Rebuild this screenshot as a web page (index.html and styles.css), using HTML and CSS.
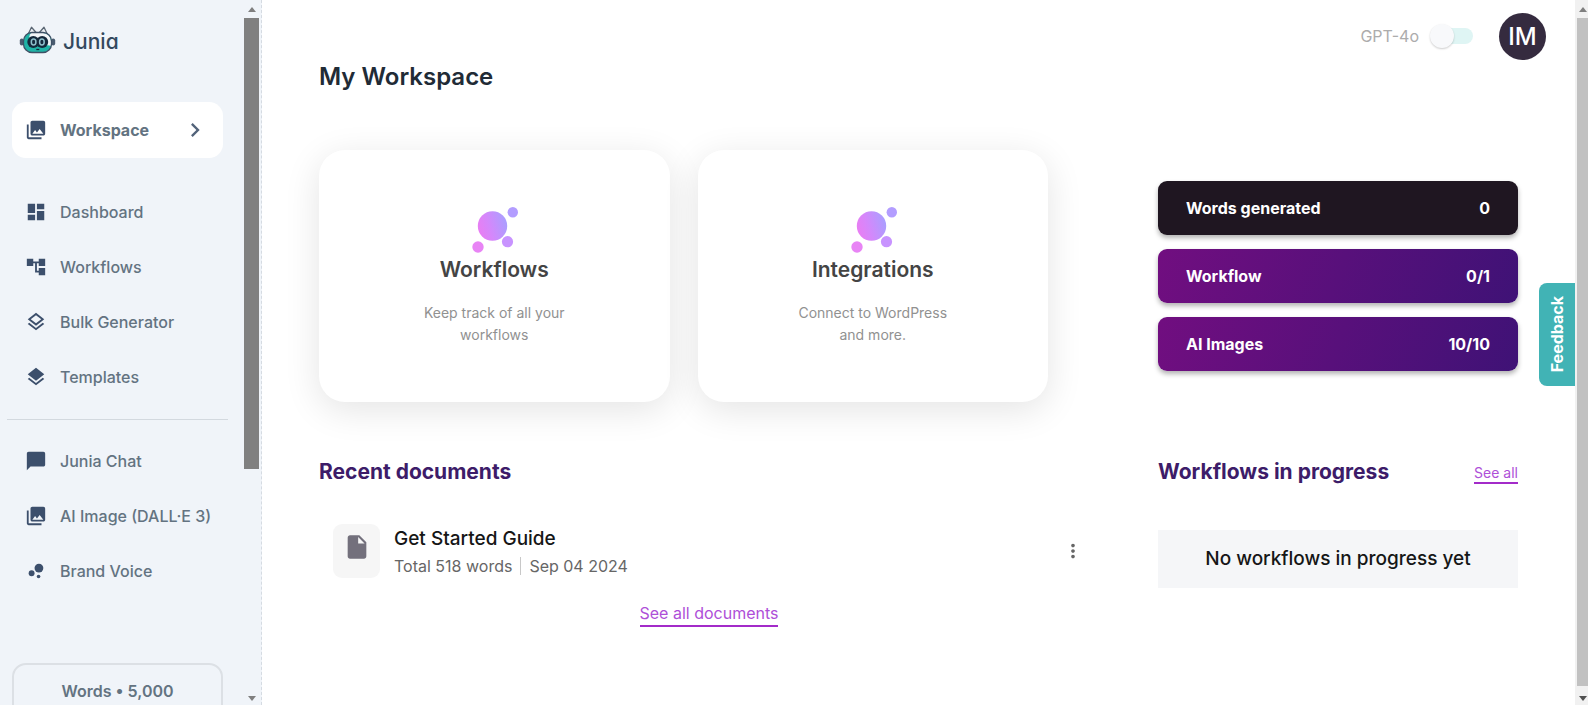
FILE: index.html
```html
<!DOCTYPE html>
<html lang="en">
<head>
<meta charset="utf-8">
<title>Junia - My Workspace</title>
<link rel="stylesheet" href="styles.css">
</head>
<body>
<svg width="0" height="0" class="defs" aria-hidden="true">
  <defs>
    <linearGradient id="blob" gradientUnits="userSpaceOnUse" x1="4" y1="30" x2="38" y2="20">
      <stop offset="0" stop-color="#f07af0"/><stop offset=".45" stop-color="#d488fb"/><stop offset="1" stop-color="#a6a1ff"/>
    </linearGradient>
    <symbol id="photos" viewBox="0 0 24 24"><path d="M22 16V4c0-1.100-.9-2-2-2H8c-1.100 0-2 .9-2 2v12c0 1.100.9 2 2 2h12c1.100 0 2-.9 2-2zm-11-4l2.030 2.710L16 11l4 5H8l3-4zM2 6v14c0 1.100.9 2 2 2h14v-2H4V6H2z"/></symbol>
    <symbol id="blobs" viewBox="-1.500 0 48 48">
      <circle cx="21" cy="21" r="14.700" fill="url(#blob)"/>
      <circle cx="41.300" cy="7.300" r="5.200" fill="#b39dff"/>
      <circle cx="36" cy="36.700" r="5.600" fill="#c893ff"/>
      <circle cx="6.500" cy="42" r="5.700" fill="#e884f5"/>
    </symbol>
  </defs>
</svg>
<div class="app">
  <aside class="sidebar">
    <div class="sidebar-body">
      <a class="brand" href="#">
        <svg class="brand-mark" viewBox="0 0 37 28" aria-hidden="true">
          <path d="M9 8.500l3.500-7.200L17.500 7M20 7l5-5.700L28.500 8.500" fill="#eef2f6" stroke="#5a6673" stroke-width="1.300" stroke-linejoin="round"/>
          <rect x=".8" y="12.500" width="4" height="7" rx="2" fill="#4a5c70"/>
          <rect x="32.200" y="12.500" width="4" height="7" rx="2" fill="#4a5c70"/>
          <rect x="4.500" y="6.500" width="28" height="20" rx="8.500" fill="#1fb3a6"/>
          <path d="M12 7h12c4.700 0 8 3.700 8 8.500V20c-3-1.800-5 .2-9-1.500L11 14c-1-2-1-5 1-7z" fill="#f3f6f8"/>
          <rect x="4.500" y="6.500" width="28" height="20" rx="8.500" fill="none" stroke="#3f5166" stroke-width="1.300"/>
          <circle cx="14.300" cy="16" r="6" fill="#14293b"/>
          <circle cx="23.200" cy="16" r="6" fill="#14293b"/>
          <ellipse cx="14.600" cy="16" rx="2.300" ry="3" fill="#14293b" stroke="#8fc0cc" stroke-width="1.500"/>
          <ellipse cx="22.900" cy="16" rx="2.300" ry="3" fill="#14293b" stroke="#8fc0cc" stroke-width="1.500"/>
          <path d="M17.300 23.500h3" stroke="#14293b" stroke-width="1.300"/>
        </svg>
        <span class="brand-name">Junia</span>
      </a>
      <nav>
        <a class="nav-item nav-current" href="#"><svg class="nav-icon"><use href="#photos"/></svg><span class="nav-label">Workspace</span><svg class="chevron" viewBox="0 0 24 24"><path d="M10 6L8.590 7.410 13.170 12l-4.580 4.590L10 18l6-6z"/></svg></a>
        <div class="nav-group">
          <a class="nav-item" href="#"><svg class="nav-icon" viewBox="0 0 24 24"><path d="M3 13h8V3H3v10zm0 8h8v-6H3v6zm10 0h8V11h-8v10zm0-18v6h8V3h-8z"/></svg>Dashboard</a>
          <a class="nav-item" href="#"><svg class="nav-icon" viewBox="0 0 24 24"><path d="M22 11V3h-7v3H9V3H2v8h7V8h2v10h4v3h7v-8h-7v3h-2V8h2v3z"/></svg>Workflows</a>
          <a class="nav-item" href="#"><svg class="nav-icon" viewBox="0 0 24 24"><path d="M11.990 18.540l-7.370-5.730L3 14.070l9 7 9-7-1.630-1.270-7.380 5.740zM12 16l7.360-5.730L21 9l-9-7-9 7 1.630 1.270L12 16zm0-11.470L17.740 9 12 13.470 6.260 9 12 4.530z"/></svg>Bulk Generator</a>
          <a class="nav-item" href="#"><svg class="nav-icon" viewBox="0 0 24 24"><path d="M11.990 18.540l-7.370-5.730L3 14.070l9 7 9-7-1.630-1.270-7.380 5.740zM12 16l7.360-5.730L21 9l-9-7-9 7 1.630 1.270L12 16z"/></svg>Templates</a>
        </div>
        <hr class="divider">
        <div class="nav-group nav-tools">
          <a class="nav-item" href="#"><svg class="nav-icon" viewBox="0 0 24 24"><path d="M20 2H4c-1.100 0-1.990.9-1.990 2L2 22l4-4h14c1.100 0 2-.9 2-2V4c0-1.100-.9-2-2-2z"/></svg>Junia Chat</a>
          <a class="nav-item" href="#"><svg class="nav-icon"><use href="#photos"/></svg>AI Image (DALL·E 3)</a>
          <a class="nav-item" href="#"><svg class="nav-icon" viewBox="0 0 24 24"><circle cx="7.200" cy="14.400" r="3.200"/><circle cx="14.800" cy="18" r="2"/><circle cx="15.200" cy="8.800" r="4.800"/></svg>Brand Voice</a>
        </div>
      </nav>
      <div class="quota">Words • 5,000</div>
    </div>
    <div class="scrollbar side-scroll" aria-hidden="true"><i class="arrow up"></i><i class="thumb"></i><i class="arrow down"></i></div>
  </aside>

  <main class="main">
    <header class="topbar">
      <label class="model" for="model">GPT-4o</label>
      <input class="switch" id="model" type="checkbox">
      <button class="avatar" type="button">IM</button>
    </header>
    <div class="content">
      <h1 class="page-title">My Workspace</h1>
      <div class="row row-top">
        <div class="cards">
          <a class="card" href="#"><svg class="card-icon"><use href="#blobs"/></svg><h2 class="card-title">Workflows</h2><p class="card-text">Keep track of all your workflows</p></a>
          <a class="card" href="#"><svg class="card-icon"><use href="#blobs"/></svg><h2 class="card-title">Integrations</h2><p class="card-text">Connect to WordPress and more.</p></a>
        </div>
        <div class="stats">
          <div class="stat stat-dark"><span>Words generated</span><span>0</span></div>
          <div class="stat"><span>Workflow</span><span>0/1</span></div>
          <div class="stat"><span>AI Images</span><span>10/10</span></div>
        </div>
      </div>
      <div class="row row-bottom">
        <section class="recent">
          <h2 class="section-title">Recent documents</h2>
          <div class="doc">
            <div class="doc-icon"><svg viewBox="0 0 24 24"><path d="M6 2c-1.100 0-1.990.9-1.990 2L4 20c0 1.100.89 2 1.990 2H18c1.100 0 2-.9 2-2V8l-6-6H6zm7 7V3.500L18.500 9H13z"/></svg></div>
            <div class="doc-info">
              <h3 class="doc-title">Get Started Guide</h3>
              <p class="doc-meta"><span>Total 518 words</span><span class="doc-date">Sep 04 2024</span></p>
            </div>
            <button class="more" type="button" aria-label="More"><svg viewBox="0 0 24 24"><path d="M12 8c1.100 0 2-.9 2-2s-.9-2-2-2-2 .9-2 2 .9 2 2 2zm0 2c-1.100 0-2 .9-2 2s.9 2 2 2 2-.9 2-2-.9-2-2-2zm0 6c-1.100 0-2 .9-2 2s.9 2 2 2 2-.9 2-2-.9-2-2-2z"/></svg></button>
          </div>
          <a class="link all-docs" href="#">See all documents</a>
        </section>
        <section>
          <div class="section-head"><h2 class="section-title">Workflows in progress</h2><a class="link link-small" href="#">See all</a></div>
          <p class="empty">No workflows in progress yet</p>
        </section>
      </div>
    </div>
    <button class="feedback" type="button">Feedback</button>
  </main>
  <div class="scrollbar page-scroll" aria-hidden="true"><i class="arrow up"></i><i class="thumb"></i><i class="arrow down"></i></div>
</div>
</body>
</html>
```
FILE: styles.css
```css
* { box-sizing: border-box; }
body, h1, h2, h3, p { margin: 0; }
body { font-family: Inter, sans-serif; font-size: 16px; color: #161616; background: #fff; overflow: hidden; }
a { color: inherit; text-decoration: none; }
button { font-family: inherit; border: 0; padding: 0; cursor: pointer; }
.defs { position: absolute; }
.app { display: grid; grid-template-columns: auto 1fr auto; height: 100vh; }

.sidebar { display: flex; min-height: 0; background: #f0f4f9; border-right: 1px dashed #d5dbe2; padding-right: 2px; }
.sidebar-body { width: 244px; padding: 26px 21px 0 12px; overflow: hidden; }
.brand { display: flex; align-items: center; gap: 7px; padding-left: 7px; height: 28px; color: #34495e; }
.brand-mark { width: 37px; height: 28px; }
.brand-name { font-size: 21px; line-height: 28px; font-weight: 500; font-feature-settings: "cv11"; padding-top: 4px; }
.nav-item { display: flex; align-items: center; height: 54px; padding: 0 0 0 13px; gap: 13px; color: #637381; font-weight: 500; white-space: nowrap; }
.nav-icon { width: 22px; height: 22px; fill: #3c4f6c; flex: none; }
.nav-current { height: 56px; margin-top: 48px; background: #fff; border-radius: 14px; font-weight: 700; padding-right: 14px; }
.nav-label { flex: 1; }
.chevron { width: 28px; height: 28px; fill: #52637a; }
.nav-group { display: grid; gap: 1px; margin-top: 27px; }
.nav-tools { margin-top: 14px; }
.divider { border: 0; height: 1px; background: #d3d9df; margin: 15px -5px 0; }
.quota { margin-top: 65px; height: 100px; border: 2px solid #dce0e5; border-radius: 14px; text-align: center; line-height: 52px; color: #637381; font-weight: 600; }

.scrollbar { display: flex; flex-direction: column; align-items: center; min-height: 0; padding: 7px 0 4px; }
.arrow { border: 4px solid transparent; }
.up { border-top: 0; border-bottom: 5px solid #7f7f7f; }
.down { border-bottom: 0; border-top: 5px solid #7f7f7f; margin-top: auto; }
.thumb { width: 100%; background: #808080; margin-top: 6px; }
.side-scroll { width: 15px; }
.side-scroll .thumb { height: 65%; }
.page-scroll { width: 13px; background: #f1f1f1; padding-left: 2px; }
.page-scroll .thumb { background: #c1c1c1; flex: 1; margin-bottom: 10px; }
.page-scroll .down { border-top-color: #505050; }

.main { position: relative; min-width: 0; }
.topbar { display: flex; align-items: center; justify-content: flex-end; height: 60px; padding: 12px 29px 0 0; }
.model { color: #acacac; }
.switch { appearance: none; position: relative; width: 38px; height: 16px; margin: 0 26px 0 16px; border-radius: 8px; background: #dff5f4; }
.switch::before { content: ""; position: absolute; left: -5px; top: -4px; width: 24px; height: 24px; border-radius: 50%; background: #f8f9fb; box-shadow: 0 1px 2px rgba(0,0,0,.2); }
.avatar { width: 47px; height: 47px; border-radius: 50%; background: #352b3f; color: #fff; font-size: 24px; font-weight: 500; }
.content { padding: 0 57px; }
.page-title { font-size: 24px; line-height: 34px; font-weight: 600; color: #212b36; }
.row { display: grid; grid-template-columns: 13fr 6fr; column-gap: 59px; }
.row-top { margin-top: 56px; align-items: center; }
.cards { display: grid; grid-template-columns: 1fr 1fr; gap: 28px; padding-right: 51px; }
.card { display: flex; flex-direction: column; align-items: center; text-align: center; min-height: 252px; padding: 55px 90px 0; background: #fff; border-radius: 26px; box-shadow: 0 8px 36px rgba(0,0,0,.11); }
.card-icon { width: 48px; height: 48px; }
.card-title { font-size: 21px; line-height: 32px; font-weight: 600; color: #444; margin-top: 1px; }
.card-text { font-size: 14px; line-height: 22px; color: #919191; margin-top: 16px; }
.stats { display: grid; gap: 14px; }
.stat { display: flex; align-items: center; justify-content: space-between; height: 54px; padding: 0 28px; border-radius: 9px; color: #fff; font-weight: 700; background: linear-gradient(110deg, #710e80, #3f1276); box-shadow: 0 3px 5px rgba(0,0,0,.3); }
.stat-dark { background: #1f1621; }

.row-bottom { margin-top: 54px; }
.section-title { font-size: 21px; line-height: 32px; font-weight: 700; color: #3d1c69; }
.section-head { display: flex; justify-content: space-between; align-items: center; }
.recent { display: flex; flex-direction: column; }
.doc { display: flex; align-items: center; margin-top: 36px; padding: 0 14px; }
.doc-icon { width: 47px; height: 54px; border-radius: 9px; background: #f6f6f6; text-align: center; padding-top: 9px; }
.doc-icon svg { width: 28px; height: 28px; fill: #73707c; }
.doc-info { flex: 1; padding: 0 0 2px 14px; }
.doc-title { font-size: 19px; line-height: 28px; font-weight: 500; }
.doc-meta { display: flex; align-items: center; line-height: 18px; margin-top: 4px; color: #666; }
.doc-date { border-left: 1px solid #c8c8c8; margin-left: 8px; padding-left: 8px; }
.more { width: 24px; height: 24px; background: none; }
.more svg { width: 22px; height: 22px; fill: #666; display: block; margin: 0 auto; }
.link { color: #ae4fd8; border-bottom: 2px solid #a32bc9; }
.all-docs { align-self: center; line-height: 24px; margin-top: 23px; }
.link-small { font-size: 14px; line-height: 18px; margin-top: 4px; }
.empty { margin-top: 42px; background: #f5f6f8; text-align: center; font-size: 19px; font-weight: 500; line-height: 58px; }
.feedback { position: absolute; right: 0; top: 283px; width: 36px; height: 103px; border-radius: 8px 0 0 8px; background: #41b3b5; color: #fff; font-size: 16px; font-weight: 700; writing-mode: sideways-lr; }
```
